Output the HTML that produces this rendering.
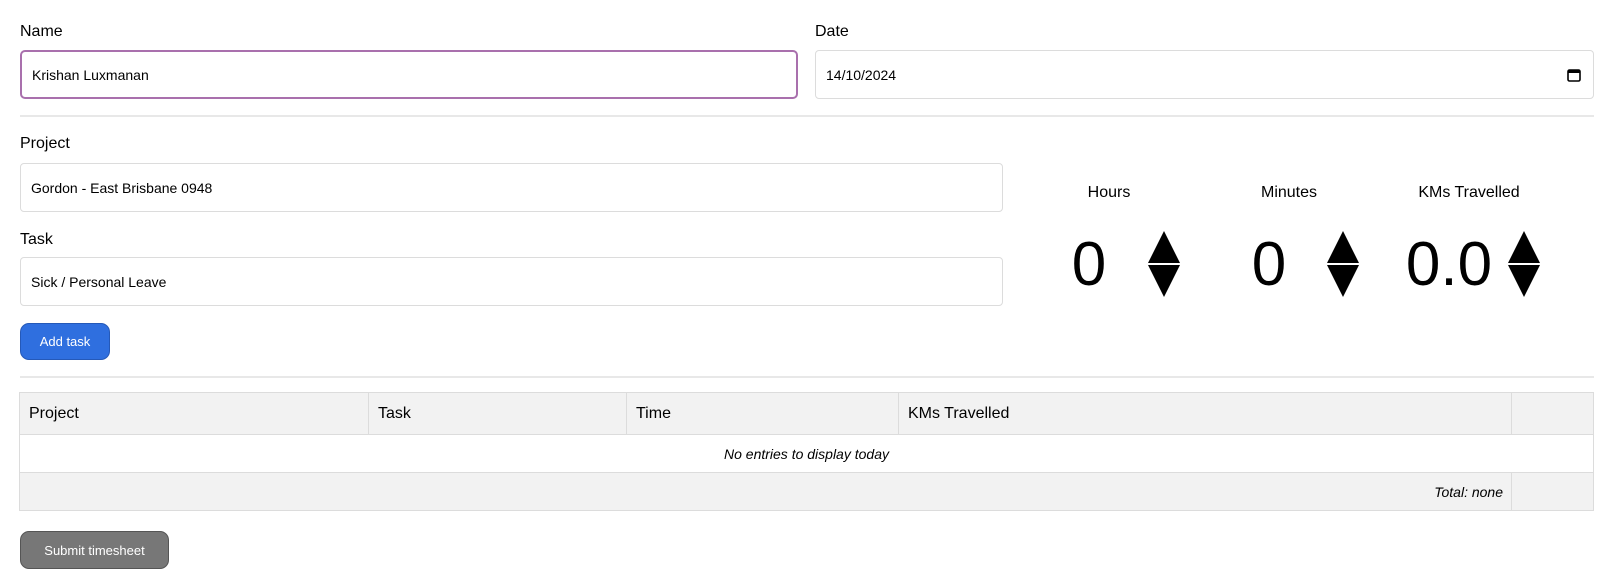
<!DOCTYPE html>
<html><head><style>
*{box-sizing:border-box;margin:0;padding:0}
body{width:1613px;height:588px;background:#fff;font-family:"Liberation Sans",sans-serif;color:#000;position:relative;overflow:hidden}
.a{position:absolute}
.lbl{font-size:16px}
.inp{position:absolute;border:1px solid #dcdcdc;border-radius:4px;background:#fff;font-size:14px;padding-left:10px;display:flex;align-items:center}
.hr{position:absolute;left:20px;width:1574px;height:2px;background:#e8e8e8}
.btn{position:absolute;border-radius:9px;color:#fff;font-size:13px;display:flex;align-items:center;justify-content:center}
.hd{font-size:16px;text-align:center;width:160px}
.num{font-size:62px;width:140px;text-align:center;line-height:1}
.tri{position:absolute;width:0;height:0;border-left:16px solid transparent;border-right:16px solid transparent}
td{border:1px solid #dcdcdc}
</style></head><body>
<div class="a lbl" style="left:20px;top:23px">Name</div>
<div class="a lbl" style="left:815px;top:23px">Date</div>
<div class="inp" style="left:20px;top:50px;width:778px;height:49px;border:2px solid #a970ad;border-radius:5px">Krishan Luxmanan</div>
<div class="inp" style="left:815px;top:50px;width:779px;height:49px">14/10/2024
<svg style="position:absolute;right:12px;top:17px" width="14" height="14" viewBox="0 0 14 14"><rect x="1" y="2" width="12" height="11" rx="1.5" fill="none" stroke="#000" stroke-width="1.6"/><rect x="1" y="2" width="12" height="3" fill="#000"/></svg></div>
<div class="hr" style="top:115px"></div>
<div class="a lbl" style="left:20px;top:135px">Project</div>
<div class="inp" style="left:20px;top:163px;width:983px;height:49px">Gordon - East Brisbane 0948</div>
<div class="a lbl" style="left:20px;top:231px">Task</div>
<div class="inp" style="left:20px;top:257px;width:983px;height:49px">Sick / Personal Leave</div>
<div class="btn" style="left:20px;top:323px;width:90px;height:37px;background:#2f6fdf;border:1px solid #2559b8">Add task</div>
<div class="hr" style="top:376px"></div>

<div class="a hd" style="left:1029px;top:184px">Hours</div>
<div class="a hd" style="left:1209px;top:184px">Minutes</div>
<div class="a hd" style="left:1389px;top:184px">KMs Travelled</div>
<div class="a num" style="left:1019px;top:234px">0</div>
<div class="a num" style="left:1199px;top:234px">0</div>
<div class="a num" style="left:1379px;top:234px">0.0</div>
<div class="tri" style="left:1148px;top:231px;border-bottom:32px solid #000"></div>
<div class="tri" style="left:1148px;top:265px;border-top:32px solid #000"></div>
<div class="tri" style="left:1327px;top:231px;border-bottom:32px solid #000"></div>
<div class="tri" style="left:1327px;top:265px;border-top:32px solid #000"></div>
<div class="tri" style="left:1508px;top:231px;border-bottom:32px solid #000"></div>
<div class="tri" style="left:1508px;top:265px;border-top:32px solid #000"></div>

<table class="a" style="left:19px;top:392px;width:1575px;border-collapse:collapse;font-size:16px">
<tr style="background:#f2f2f2;height:42px"><td style="width:349px;padding-left:9px">Project</td><td style="width:258px;padding-left:9px">Task</td><td style="width:272px;padding-left:9px">Time</td><td style="width:613px;padding-left:9px">KMs Travelled</td><td></td></tr>
<tr style="height:38px"><td colspan="5" style="text-align:center;font-style:italic;font-size:14px">No entries to display today</td></tr>
<tr style="background:#f2f2f2;height:38px"><td colspan="4" style="text-align:right;font-style:italic;font-size:14px;padding-right:8px">Total: none</td><td></td></tr>
</table>
<div class="btn" style="left:20px;top:531px;width:149px;height:38px;background:#777;border:1px solid #555">Submit timesheet</div>
</body></html>
